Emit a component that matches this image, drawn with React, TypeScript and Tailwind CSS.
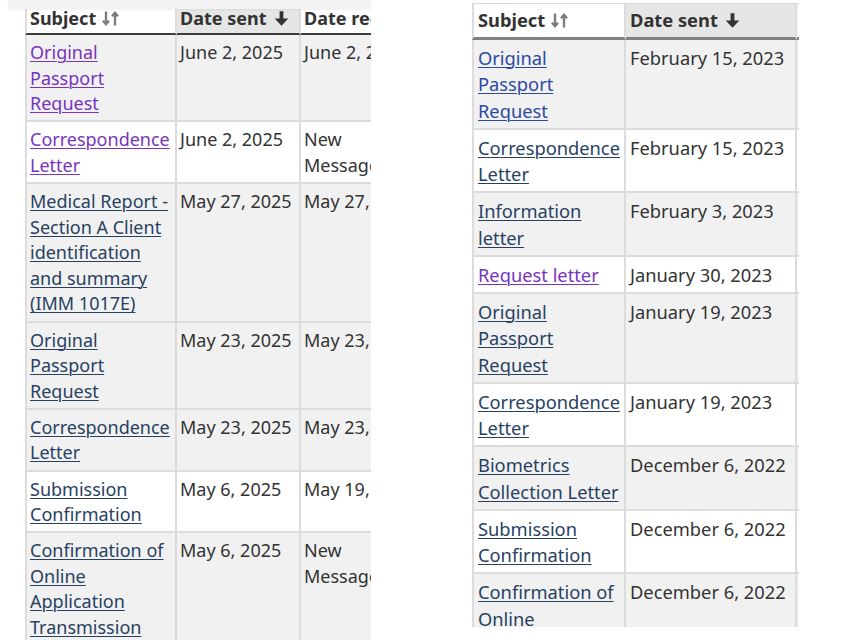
import type { ReactNode } from "react";

type Tone = "visited" | "link" | "active";

type Row = {
  lines: string[];
  tone: Tone;
  sent: string;
  received?: string[];
  shaded: boolean;
};

const toneClass: Record<Tone, string> = {
  visited: "text-[#7834bc]",
  link: "text-[#284162]",
  active: "text-[#2b4aa3]",
};

const recentRows: Row[] = [
  { lines: ["Original", "Passport", "Request"], tone: "visited", sent: "June 2, 2025", received: ["June 2, 2025"], shaded: true },
  { lines: ["Correspondence", "Letter"], tone: "visited", sent: "June 2, 2025", received: ["New", "Message"], shaded: false },
  {
    lines: ["Medical Report -", "Section A Client", "identification", "and summary", "(IMM 1017E)"],
    tone: "link",
    sent: "May 27, 2025",
    received: ["May 27, 2025"],
    shaded: true,
  },
  { lines: ["Original", "Passport", "Request"], tone: "link", sent: "May 23, 2025", received: ["May 23, 2025"], shaded: true },
  { lines: ["Correspondence", "Letter"], tone: "link", sent: "May 23, 2025", received: ["May 23, 2025"], shaded: true },
  { lines: ["Submission", "Confirmation"], tone: "link", sent: "May 6, 2025", received: ["May 19, 2025"], shaded: false },
  {
    lines: ["Confirmation of", "Online", "Application", "Transmission"],
    tone: "link",
    sent: "May 6, 2025",
    received: ["New", "Message"],
    shaded: true,
  },
];

const olderRows: Row[] = [
  { lines: ["Original", "Passport", "Request"], tone: "active", sent: "February 15, 2023", shaded: true },
  { lines: ["Correspondence", "Letter"], tone: "link", sent: "February 15, 2023", shaded: false },
  { lines: ["Information", "letter"], tone: "link", sent: "February 3, 2023", shaded: true },
  { lines: ["Request letter"], tone: "visited", sent: "January 30, 2023", shaded: false },
  { lines: ["Original", "Passport", "Request"], tone: "link", sent: "January 19, 2023", shaded: true },
  { lines: ["Correspondence", "Letter"], tone: "link", sent: "January 19, 2023", shaded: false },
  { lines: ["Biometrics", "Collection Letter"], tone: "link", sent: "December 6, 2022", shaded: true },
  { lines: ["Submission", "Confirmation"], tone: "link", sent: "December 6, 2022", shaded: false },
  {
    lines: ["Confirmation of", "Online", "Application", "Transmission"],
    tone: "link",
    sent: "December 6, 2022",
    shaded: true,
  },
];

function SortIcon() {
  return (
    <svg width="18" height="15" viewBox="0 0 18 15" className="ml-[6px] inline-block" aria-hidden>
      <g fill="none" stroke="#7d7d7d" strokeWidth="2.4" strokeLinecap="butt">
        <path d="M4 0.5v12.5" />
        <path d="M1 9.8 4 13.2l3-3.4" />
        <path d="M13 14.5V2" />
        <path d="M10 5.2 13 1.8l3 3.4" />
      </g>
    </svg>
  );
}

function SortedIcon() {
  return (
    <svg width="15" height="15" viewBox="0 0 15 15" className="ml-[7px] inline-block" aria-hidden>
      <path d="M5.6 0.3h3.8v7.2h4.9L7.5 14.7 0.7 7.5h4.9z" fill="#333" />
    </svg>
  );
}

function Lines({ lines }: { lines: string[] }) {
  return (
    <>
      {lines.map((line, i) => (
        <span key={i} className="block whitespace-nowrap">
          {line}
        </span>
      ))}
    </>
  );
}

function HeadCell({ children, className }: { children: ReactNode; className: string }) {
  return <th className={`text-left font-bold align-top whitespace-nowrap ${className}`}>{children}</th>;
}

export default function App() {
  return (
    <div className="flex h-[640px] w-[866px] overflow-hidden bg-white font-['Noto_Sans',sans-serif] text-[#333]">
      {/* recent messages, cropped on the right */}
      <div className="relative h-[640px] w-[371px] shrink-0 overflow-hidden">
        <div className="pl-[25px]">
          <table className="w-[420px] table-fixed border-separate border-spacing-0 text-[18px] leading-[25.6px]">
            <thead>
              <tr>
                <HeadCell className="w-[152px] border-b-2 border-l-2 border-r-2 border-[#dcdcdc] border-b-[#3d3d3d] bg-white px-[3px] pt-[5.5px] pb-[2px]">
                  <span className="inline-flex items-center">
                    Subject
                    <SortIcon />
                  </span>
                </HeadCell>
                <HeadCell className="w-[124px] border-b-2 border-r-2 border-[#dcdcdc] border-b-[#3d3d3d] bg-[#e6e6e6] px-[3px] pt-[5.5px] pb-[2px]">
                  <span className="inline-flex items-center">
                    Date sent
                    <SortedIcon />
                  </span>
                </HeadCell>
                <HeadCell className="w-[144px] border-b-2 border-r-2 border-[#dcdcdc] border-b-[#3d3d3d] bg-white px-[3px] pt-[5.5px] pb-[2px]">
                  Date received
                </HeadCell>
              </tr>
            </thead>
            <tbody>
              {recentRows.map((row, i) => {
                const bg = row.shaded ? "bg-[#f1f1f1]" : "bg-white";
                return (
                  <tr key={i} className={bg}>
                    <td className="border-b-2 border-l-2 border-r-2 border-[#dcdcdc] px-[3px] pt-[5px] pb-[3.5px] align-top">
                      <a href="#" className={`underline decoration-1 underline-offset-2 ${toneClass[row.tone]}`}>
                        <Lines lines={row.lines} />
                      </a>
                    </td>
                    <td className="border-b-2 border-r-2 border-[#dcdcdc] px-[3px] pt-[5px] pb-[3.5px] align-top whitespace-nowrap">
                      {row.sent}
                    </td>
                    <td className="border-b-2 border-r-2 border-[#dcdcdc] px-[3px] pt-[5px] pb-[3.5px] align-top">
                      <Lines lines={row.received ?? []} />
                    </td>
                  </tr>
                );
              })}
            </tbody>
          </table>
        </div>
        {/* sticky bar sliding over the header */}
        <div className="absolute left-[8px] top-0 h-[9px] w-[372px] bg-[#f3f3f3] shadow-[0_1px_2px_rgba(0,0,0,0.06)]" />
      </div>

      {/* older messages */}
      <div className="ml-[101px] mt-[3px] h-[624px] w-[327px] shrink-0 overflow-hidden">
        <table className="w-[430px] table-fixed border-separate border-spacing-0 text-[18.3px] leading-[26.5px]">
          <thead>
            <tr>
              <HeadCell className="w-[154px] border-t border-b-[3px] border-l-2 border-r-2 border-[#dcdcdc] border-b-[#808080] bg-white px-[4px] pt-[3px] pb-[3px]">
                <span className="inline-flex items-center">
                  Subject
                  <SortIcon />
                </span>
              </HeadCell>
              <HeadCell className="w-[171px] border-t border-b-[3px] border-r-2 border-[#dcdcdc] border-b-[#808080] bg-[#e6e6e6] px-[4px] pt-[3px] pb-[3px]">
                <span className="inline-flex items-center">
                  Date sent
                  <SortedIcon />
                </span>
              </HeadCell>
              <HeadCell className="w-[105px] border-t border-b-[3px] border-r-2 border-[#dcdcdc] border-b-[#808080] bg-[#f7f7f7] px-[4px] pt-[3px] pb-[3px]">
                Date received
              </HeadCell>
            </tr>
          </thead>
          <tbody>
            {olderRows.map((row, i) => {
              const bg = row.shaded ? "bg-[#f1f1f1]" : "bg-white";
              return (
                <tr key={i} className={bg}>
                  <td className="border-b-2 border-l-2 border-r-2 border-[#dcdcdc] px-[4px] pt-[5px] pb-[3.5px] align-top">
                    <a href="#" className={`underline decoration-1 underline-offset-2 ${toneClass[row.tone]}`}>
                      <Lines lines={row.lines} />
                    </a>
                  </td>
                  <td className="border-b-2 border-r-2 border-[#dcdcdc] px-[4px] pt-[5px] pb-[3.5px] align-top whitespace-nowrap">
                    {row.sent}
                  </td>
                  <td className="border-b-2 border-r-2 border-[#dcdcdc] px-[4px] pt-[5px] pb-[3.5px] align-top" />
                </tr>
              );
            })}
          </tbody>
        </table>
      </div>
    </div>
  );
}
